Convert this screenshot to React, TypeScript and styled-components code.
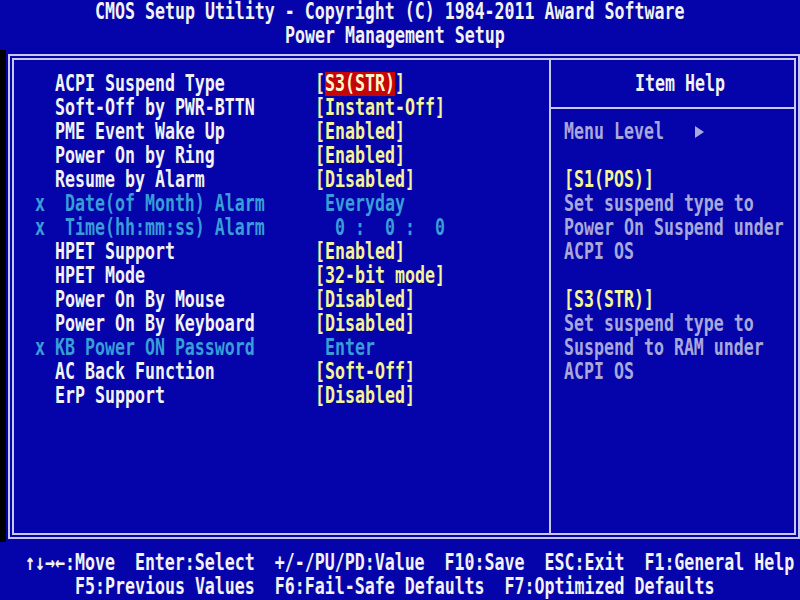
import React from 'react';
import styled, { createGlobalStyle } from 'styled-components';

const GlobalStyle = createGlobalStyle`
  html, body {
    margin:0;
    padding:0;
    background:#0404aa;
  }
`;

const Screen = styled.div`
  width:800px;
  height:600px;
  overflow:hidden;
  background:#0404aa;
  color:#f2f2f2;
  font-family:"DejaVu Sans Mono","Liberation Mono",monospace;
  font-size:16.6px;
  font-weight:bold;
  display:flex;
  flex-direction:column;
`;

const Line = styled.div<{ $indent: number }>`
  height:24px;
  line-height:24px;
  padding-left:${p => p.$indent}px;
  white-space:pre;
`;

// BIOS glyphs are tall and narrow, so stretch the text vertically
const Glyphs = styled.span`
  display:inline-block;
  white-space:pre;
  transform:scaleY(1.36);
`;

const Middle = styled.div`
  display:flex;
  height:503px;
  align-items:flex-start;
`;

const Bezel = styled.div`
  width:6px;
  height:492px;
  margin-top:2px;
  flex:none;
  background:#000;
`;

const Frame = styled.div`
  margin:6px 0 0 2px;
  width:792px;
  height:485px;
  box-sizing:border-box;
  border:6px double #c8c8ee;
  display:flex;
`;

const SettingsPanel = styled.div`
  width:535px;
  flex:none;
  padding:12px 0 0 21px;
  box-sizing:border-box;
`;

const SettingRow = styled.div<{ $dim?: boolean }>`
  display:grid;
  grid-template-columns:20px 260px auto;
  height:24px;
  line-height:24px;
  color:${p => (p.$dim ? '#3a9cd8' : '#f2f2f2')};
`;

const Value = styled.span<{ $dim?: boolean }>`
  color:${p => (p.$dim ? '#3a9cd8' : '#f4f49a')};
  white-space:pre;
`;

const Highlight = styled.span`
  display:inline-block;
  height:24px;
  background:#c40606;
  color:#fff6d0;
`;

const HelpPanel = styled.div`
  flex:1;
  border-left:2px solid #c8c8ee;
  display:flex;
  flex-direction:column;
`;

const HelpHead = styled.div`
  padding:12px 0 11px 84px;
  border-bottom:2px solid #c8c8ee;
  height:24px;
  line-height:24px;
`;

const HelpBody = styled.div`
  padding:11px 0 0 13px;
`;

const HelpLine = styled.div<{ $tone: 'gray' | 'yellow' }>`
  height:24px;
  line-height:24px;
  color:${p => (p.$tone === 'yellow' ? '#f4f49a' : '#a8a8dc')};
  display:flex;
  align-items:center;
`;

const Pointer = styled.svg`
  margin-left:31px;
  width:9px;
  height:12px;
  fill:#a8a8dc;
`;

const Footer = styled.div`
  display:flex;
  flex-direction:column;
`;

type Setting = { label: string; value: string; dim?: boolean };

const settings: Setting[] = [
  { label: 'ACPI Suspend Type', value: '[S3(STR)]' },
  { label: 'Soft-Off by PWR-BTTN', value: '[Instant-Off]' },
  { label: 'PME Event Wake Up', value: '[Enabled]' },
  { label: 'Power On by Ring', value: '[Enabled]' },
  { label: 'Resume by Alarm', value: '[Disabled]' },
  { label: ' Date(of Month) Alarm', value: ' Everyday', dim: true },
  { label: ' Time(hh:mm:ss) Alarm', value: '  0 :  0 :  0', dim: true },
  { label: 'HPET Support', value: '[Enabled]' },
  { label: 'HPET Mode', value: '[32-bit mode]' },
  { label: 'Power On By Mouse', value: '[Disabled]' },
  { label: 'Power On By Keyboard', value: '[Disabled]' },
  { label: 'KB Power ON Password', value: ' Enter', dim: true },
  { label: 'AC Back Function', value: '[Soft-Off]' },
  { label: 'ErP Support', value: '[Disabled]' },
];

const helpLines: { text: string; tone: 'gray' | 'yellow' }[] = [
  { text: '', tone: 'gray' },
  { text: '[S1(POS)]', tone: 'yellow' },
  { text: 'Set suspend type to', tone: 'gray' },
  { text: 'Power On Suspend under', tone: 'gray' },
  { text: 'ACPI OS', tone: 'gray' },
  { text: '', tone: 'gray' },
  { text: '[S3(STR)]', tone: 'yellow' },
  { text: 'Set suspend type to', tone: 'gray' },
  { text: 'Suspend to RAM under', tone: 'gray' },
  { text: 'ACPI OS', tone: 'gray' },
];

const App = () => {
  return (
    <Screen>
      <GlobalStyle />
      <Line $indent={95}>
        <Glyphs>CMOS Setup Utility - Copyright (C) 1984-2011 Award Software</Glyphs>
      </Line>
      <Line $indent={285}>
        <Glyphs>Power Management Setup</Glyphs>
      </Line>

      <Middle>
        <Bezel />
        <Frame>
          <SettingsPanel>
            {settings.map((s, i) => (
              <SettingRow key={i} $dim={s.dim}>
                <Glyphs>{s.dim ? 'x' : ''}</Glyphs>
                <Glyphs>{s.label}</Glyphs>
                <Value $dim={s.dim}>
                  {i === 0 ? (
                    <>
                      <Glyphs>[</Glyphs>
                      <Highlight><Glyphs>S3(STR)</Glyphs></Highlight>
                      <Glyphs>]</Glyphs>
                    </>
                  ) : (
                    <Glyphs>{s.value}</Glyphs>
                  )}
                </Value>
              </SettingRow>
            ))}
          </SettingsPanel>

          <HelpPanel>
            <HelpHead>
              <Glyphs>Item Help</Glyphs>
            </HelpHead>
            <HelpBody>
              <HelpLine $tone="gray">
                <Glyphs>Menu Level</Glyphs>
                <Pointer viewBox="0 0 9 12">
                  <polygon points="0,0 9,6 0,12" />
                </Pointer>
              </HelpLine>
              {helpLines.map((h, i) => (
                <HelpLine key={i} $tone={h.tone}>
                  <Glyphs>{h.text}</Glyphs>
                </HelpLine>
              ))}
            </HelpBody>
          </HelpPanel>
        </Frame>
      </Middle>

      <Footer>
        <Line $indent={25}>
          <Glyphs>↑↓→←:Move  Enter:Select  +/-/PU/PD:Value  F10:Save  ESC:Exit  F1:General Help</Glyphs>
        </Line>
        <Line $indent={75}>
          <Glyphs>F5:Previous Values  F6:Fail-Safe Defaults  F7:Optimized Defaults</Glyphs>
        </Line>
      </Footer>
    </Screen>
  );
};

export default App;
